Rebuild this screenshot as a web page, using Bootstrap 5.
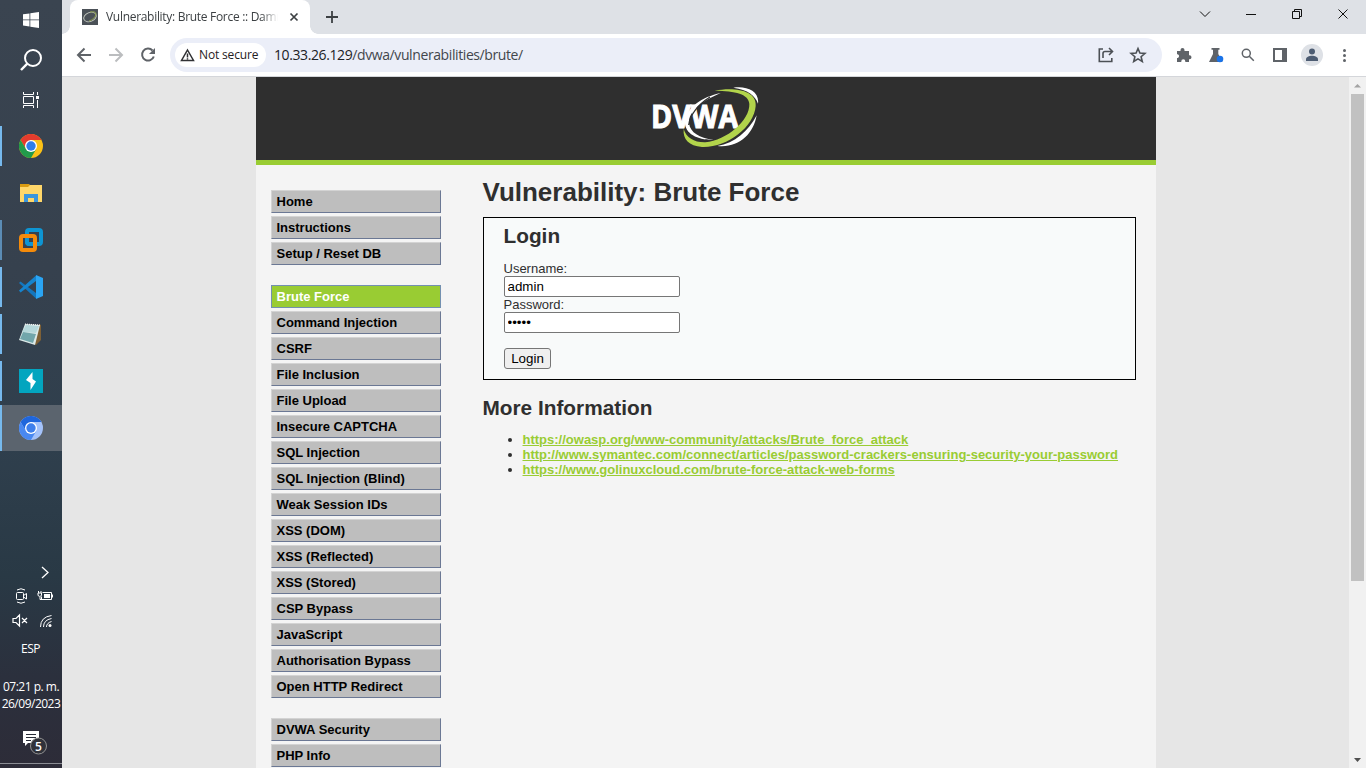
<!DOCTYPE html>
<html lang="en">
<head>
<meta charset="utf-8">
<title>Vulnerability: Brute Force :: Damn Vulnerable Web Application</title>
<link href="https://cdn.jsdelivr.net/npm/bootstrap@5.3.0/dist/css/bootstrap.min.css" rel="stylesheet">
<style>
body{width:1366px;height:768px;overflow:hidden;font-family:"Liberation Sans",Arial,sans-serif;font-size:13px;line-height:15px;color:#2f2f2f}
svg{display:block;flex:none}
.taskbar{width:62px;height:768px;background:linear-gradient(#3a4450 0,#36414e 35%,#2f3f4d 58%,#293945 75%,#2b303d 88%,#2d2c38 100%);color:#fff;font-family:"Open Sans",sans-serif}
.taskbar>*{flex-shrink:0}
.slot{height:40px}
.app{height:46px;margin-bottom:1px;border-left:2px solid transparent;padding-right:2px}
.app.running{border-image:linear-gradient(transparent 4px,#76b9ed 4px,#76b9ed 42px,transparent 42px) 1}
.app.dim{border-image:linear-gradient(transparent 4px,#5b8cb5 4px,#5b8cb5 42px,transparent 42px) 1}
.app.current{background:#5b646e;border-color:#76b9ed}
.tray{margin-top:112px;height:68px}
.lang{font-size:12px;line-height:16px;margin-top:9px;letter-spacing:-.55px;padding-right:1px}
.clock{font-size:12px;line-height:17px;margin-top:21px;letter-spacing:-.5px;white-space:nowrap}
.notice{margin-top:9px;height:40px}
.edge{height:1px;background:#8b8d94;margin-top:auto;margin-bottom:4px}
.tabs-strip{height:34px;background:#dee1e6}
.page-tab{width:240px;height:34px;margin-left:8px;background:#fff;border-radius:8px 8px 0 0;padding:0 11px 0 12px;position:relative}
.page-tab::before,.page-tab::after{content:"";position:absolute;bottom:0;width:8px;height:8px}
.page-tab::before{left:-8px;background:radial-gradient(circle at 0 0,transparent 7.5px,#fff 8px)}
.page-tab::after{right:-8px;background:radial-gradient(circle at 100% 0,transparent 7.5px,#fff 8px)}
.tab-title{width:176px;margin-left:8px;flex:none;font:12px/18px "Open Sans",sans-serif;letter-spacing:-.3px;color:#3c4043;white-space:nowrap;-webkit-mask-image:linear-gradient(90deg,#000 155px,transparent 172px)}
.toolbar-row{height:42px;background:#fff}
.omnibox{height:34px;width:992px;border-radius:17px;background:#ebeef8;margin-left:10px;padding:0 15px 0 5px}
.secure-chip{width:91px;height:24px;border-radius:12px;background:#fff;font:12px/16px "Open Sans",sans-serif;letter-spacing:-.15px;color:#1f2023;padding-left:5px;white-space:nowrap}
.addr{font:14px/20px "Open Sans",sans-serif;color:#42464c;margin-left:8px;letter-spacing:-.4px}
.addr b{font-weight:400;color:#202124}
.viewport{height:692px;border-top:1px solid #d4d6da;background:#e6e6e6}
.site{width:900px;margin-left:194px;background:#f4f4f4}
.site-head{height:88px;background:#2f2f2f;border-bottom:5px solid #9c3;padding:9px 0 0 396px}
.side{width:170px;margin:25px 0 0 15px}
.menu-link{display:block;height:23px;border:1px solid;border-color:#d3d3d3 #6b7894 #6b7894 #d3d3d3;background:#bebebe;color:#000;font-weight:700;line-height:21px;padding-left:4.5px;margin-bottom:3px;text-decoration:none;white-space:nowrap}
.menu-link.selected{background:#9c3;color:#fff;border-color:#7390b0}
.menu-group{margin-bottom:20px}
.main-body{width:653px;margin:11px 0 0 42px}
h1{font-size:26px;font-weight:700;line-height:30px;margin:0 0 10px;padding-top:1px;text-indent:-.5px}
h2{font-size:20.8px;font-weight:700;line-height:24px;margin:0;text-indent:-.5px}
.vuln-box{height:163px;border:1px solid #000;background:#f8fafa;padding:6px 20px}
.vuln-box label{text-indent:-.5px}
.field{display:block;width:176px;height:21px;border:1px solid #767676;border-radius:2px;background:#fff;color:#000;padding:1px 2.5px;font-size:13.33px;line-height:17px}
.submit{display:block;height:21px;width:47px;border:1px solid #767676;border-radius:3px;background:#efefef;color:#000;padding:0;font-size:13.33px;line-height:18px;margin-top:15px}
.links{margin:12px 0 0;padding-left:39.500px}
.links a{color:#9c3;font-weight:700}
.links li{white-space:nowrap}
.scroller{width:17px;background:#f1f1f1}
.thumb{width:13px;height:487px;background:#c1c1c1}
</style>
</head>
<body class="d-flex">
<nav class="taskbar d-flex flex-column flex-shrink-0">
  <div class="slot d-flex align-items-center justify-content-center"><svg width="16" height="16" viewBox="0 0 16 16" fill="#fff"><path d="M0 2.3 6.5 1.4V7.5H0zM7.3 1.2 16 0V7.5H7.3zM0 8.3H6.5V14.5L0 13.6zM7.3 8.3H16V16L7.3 14.7z"/></svg></div>
  <div class="slot d-flex align-items-center justify-content-center"><svg width="22" height="22" viewBox="0 0 22 22" fill="none" stroke="#fff" stroke-width="2"><circle cx="13" cy="9" r="8"/><path d="M7.3 14.7 1 21" stroke-width="2.4"/></svg></div>
  <div class="slot d-flex align-items-center justify-content-center mb-1"><svg width="16" height="16" viewBox="0 0 16 16" fill="none" stroke="#fff"><path d="M.5 4.5h10v7H.5zM.5 0v2.5h10V0M.5 16v-2.500h10V16M14.500 0v3M14.500 8v8"/><path d="M13 4h3v3h-3z" fill="#fff" stroke="none"/></svg></div>
  <div class="app running d-flex align-items-center justify-content-center" style="margin-top:-1px"><svg width="24" height="24" viewBox="0 0 24 24"><circle cx="12" cy="12" r="12" fill="#fbc116"/><path d="M12 6h10.400A12 12 0 0 0 1.600 6L7 15z" fill="#e33b2e"/><path d="M1.600 6A12 12 0 0 0 12 24l5.200-9L12 17.500 7 15z" fill="#229b4b"/><circle cx="12" cy="12" r="6" fill="#fff"/><circle cx="12" cy="12" r="4.700" fill="#2f7de9"/></svg></div>
  <div class="app d-flex align-items-center justify-content-center"><svg width="22" height="18" viewBox="0 0 22 18"><path d="M0 0h9l2 2h11v5H0z" fill="#d99b12"/><path d="M0 3h8l2-2h12v17H0z" fill="#ffd76a"/><path d="M4 18v-8h14v8h-4v-4H8v4z" fill="#3b96dd"/></svg></div>
  <div class="app dim d-flex align-items-center justify-content-center"><svg width="24" height="24" viewBox="0 0 24 24" fill="none" stroke-width="4"><rect x="8" y="2" width="14" height="14" rx="2" stroke="#0e95d3"/><rect x="2" y="8" width="14" height="14" rx="2" stroke="#f58b0a"/><path d="M8 10V14q0 2 2 2h4" stroke="#0e95d3" stroke-width="3.500"/></svg></div>
  <div class="app running d-flex align-items-center justify-content-center"><svg width="24" height="24" viewBox="0 0 24 24"><path d="M17 6v12L1.500 6.500 0 8l17 15.500z" fill="#1476bd"/><path d="M17 .5 0 15.500 1.500 17.500 17 6z" fill="#1684ce"/><path d="M17 0l7 3v18l-7 3z" fill="#2aa5f4"/></svg></div>
  <div class="app running d-flex align-items-center justify-content-center"><svg width="24" height="24" viewBox="0 0 24 24"><path d="M20 2l2 1v15l-5 5-2-1z" fill="#7e6036"/><path d="M6 2l15 1-5 20L0 18z" fill="#dce9e8"/><path d="M7 3l13 1-3 7-14-1z" fill="#b5d8db"/><path d="M4 10l13 2-3 9L1 17z" fill="#71a6ab"/><path d="M6 2l15 1" stroke="#fff" stroke-dasharray="1 1"/></svg></div>
  <div class="app running d-flex align-items-center justify-content-center"><svg width="24" height="24" viewBox="0 0 24 24"><path d="M0 0h24v24H0z" fill="#03a5bf"/><path d="M13.500 3v7l3.500 2.500L11.500 21v-7L7 11z" fill="#fff"/></svg></div>
  <div class="app current d-flex align-items-center justify-content-center"><svg width="24" height="24" viewBox="0 0 24 24"><circle cx="12" cy="12" r="12" fill="#a4c2fa"/><path d="M12 6h10.400A12 12 0 0 0 1.600 6L7 15z" fill="#1f66dc"/><path d="M1.600 6A12 12 0 0 0 12 24l5.200-9L12 17.500 7 15z" fill="#4988f0"/><circle cx="12" cy="12" r="6" fill="#fff"/><circle cx="12" cy="12" r="4.700" fill="#3e7fec"/></svg></div>
  <div class="tray"><svg width="62" height="68" viewBox="0 564 62 68" fill="none" stroke="#fff"><path d="M42 567l6 5.500-6 5.500" stroke-width="1.300"/><rect x="16.500" y="592.500" width="7" height="7" rx="1"/><path d="M23.500 595.500l3-2v5.500l-3-2M17 590q4-2.500 8 0M17 602q4 2.500 8 0"/><path d="M42.500 592.500h9v7h-10v-3"/><path d="M44 594h6v4h-6z" fill="#fff" stroke="none"/><path d="M52.500 594.500v3M38 593h3.500v2.500q-1.700 2-3.500 0zM38.500 591v2M41 591v2M40 597v2.500h2"/><path d="M13 618.500h3l3.500-3.500v11l-3.500-3.500h-3zM22 618l5 5M27 618l-5 5" stroke-width="1.200"/><path d="M40.500 627q0-10 11-11.500M43.500 627q0-7 8-8.500M46.500 627q0-4 5-5.500"/><circle cx="50" cy="625.500" r="1.500" fill="#fff" stroke="none"/></svg></div>
  <div class="lang text-center">ESP</div>
  <div class="clock text-center">07:21 p. m.<br>26/09/2023</div>
  <div class="notice"><svg width="62" height="40" viewBox="0 721 62 40"><path d="M23 731h16v12H28l-3 3v-3h-2z" fill="#fff"/><path d="M26 734.500h10M26 737.500h10M26 740.500h5" stroke="#292d38"/><circle cx="38.500" cy="746" r="8" fill="#30323a" stroke="#929292"/><text x="38.500" y="750.500" text-anchor="middle" font-family="Open Sans" font-size="12" font-weight="600" fill="#fff">5</text></svg></div>
  <div class="edge"></div>
</nav>
<div class="flex-grow-1">
  <header class="tabs-strip d-flex">
    <div class="page-tab d-flex align-items-center">
      <svg width="16" height="16" viewBox="0 0 16 16"><path d="M0 0h16v16H0z" fill="#4b5157"/><ellipse cx="8" cy="8" rx="6.500" ry="4.500" transform="rotate(-22 8 8)" fill="none" stroke="#c4c9c0" stroke-width=".9"/><path d="M8 3q6-1 6 2-1 5-7 7" fill="none" stroke="#8b9d4c"/></svg>
      <div class="tab-title">Vulnerability: Brute Force :: Damn</div>
      <svg class="ms-auto" width="10" height="10" viewBox="0 0 10 10" stroke="#3c4043" stroke-width="1.700"><path d="M1.500 1.500l7 7M8.500 1.500l-7 7"/></svg>
    </div>
    <svg width="40" height="34" viewBox="310 0 40 34" stroke="#3c4043" stroke-width="1.800"><path d="M326 17h12M332 11v12"/></svg>
    <svg class="ms-auto" width="176" height="34" viewBox="1190 0 176 34" stroke="#111" fill="none"><path d="M1200 11.500l5 5 5-5M1246 14.500h10M1292.500 11.500h7v7h-7zM1294.500 11.500v-2h7v7h-2M1338.500 9.500l9 9M1347.500 9.500l-9 9"/></svg>
  </header>
  <div class="toolbar-row d-flex align-items-center">
    <svg width="98" height="42" viewBox="62 34 98 42" fill="none" stroke="#5f6368" stroke-width="2"><path d="M91 55H78M84.500 48.500 78 55l6.500 6.500"/><path d="M109 55h13M115.500 48.500 122 55l-6.500 6.500" stroke="#bbbdbf"/><path d="M152.500 50.500a6 6 0 1 0 1.300 6"/><path d="M155 48v6h-6z" fill="#5f6368" stroke="none"/></svg>
    <div class="omnibox d-flex align-items-center">
      <div class="secure-chip d-flex align-items-center"><svg class="me-1" width="15" height="14" viewBox="0 0 15 14" fill="none" stroke="#303134" stroke-width="1.500"><path d="M7.500 2l6 10.500h-12zM7.500 5.500v4M7.500 10.200v1.300"/></svg>Not secure</div>
      <div class="addr"><b>10.33.26.129</b>/dvwa/vulnerabilities/brute/</div>
      <svg class="ms-auto" width="50" height="34" viewBox="1097 38 50 34" fill="none" stroke="#4c5055" stroke-width="1.600"><path d="M1103 49h-3.700v12.500h12.500V58M1103 58v-4.500q0-2 2-2h7M1109 48l3.500 3.500-3.500 3.500"/><path d="M1138 48.500l1.900 4.600 5 .4-3.800 3.200 1.200 4.800-4.300-2.600-4.300 2.600 1.200-4.800-3.800-3.200 5-.4z"/></svg>
    </div>
    <svg width="204" height="42" viewBox="1162 34 204 42" fill="#5f6368"><path d="M1177 51h3.500v-1a2 2 0 0 1 4 0v1h4.500v4.300h.5a2 2 0 0 1 0 4h-.5V62h-3.700v-.7a2 2 0 0 0-4 0v.7H1177v-4h.7a2 2 0 0 0 0-3.800h-.7z"/><path d="M1211.500 48h8v1.700h-1.200V54l4.200 8h-13.500l4-8v-4.300h-1.500z"/><circle cx="1220" cy="59" r="3.300" fill="#1a73e8"/><g fill="none" stroke="#5f6368" stroke-width="1.500"><circle cx="1246.300" cy="53.300" r="4"/><path d="M1249.300 56.300l4.500 4.500"/></g><path fill-rule="evenodd" d="M1273 48h14v14h-14zM1275 50v10h7V50z"/><circle cx="1312" cy="55" r="11" fill="#dee1e6"/><g fill="#4d5c72"><circle cx="1312" cy="51.500" r="3"/><path d="M1306 61v-1.500c0-5 12-5 12 0V61z"/></g><circle cx="1344.500" cy="50.500" r="1.500"/><circle cx="1344.500" cy="55.500" r="1.500"/><circle cx="1344.500" cy="60.500" r="1.500"/></svg>
  </div>
  <div class="viewport d-flex">
    <div class="site">
      <div class="site-head"><svg width="107" height="62" viewBox="66 33 321 186"><path d="M310 38C350 32 389 48 384 86 376 62 354 44 310 38z" fill="#fff"/><path d="M380 121C370 178 326 220 262 213 315 204 354 170 380 121z" fill="#fff"/><path d="M272 54C220 76 174 108 177 145 181 174 208 188 250 195 205 196 164 177 165 142 169 96 216 66 272 54z" fill="#fff"/><text x="63" y="159" font-family="Open Sans" font-weight="700" font-size="97" fill="#fff" stroke="#fff" stroke-width="3" textLength="262" lengthAdjust="spacingAndGlyphs">DVWA</text><path d="M176 150C182 117 205 88 240 66" fill="none" stroke="#2f2f2f" stroke-width="4"/><path d="M254 47C310 36 381 44 377 93 372 157 290 219 216 216 177 213 158 193 161 162 169 188 193 203 226 202 290 196 360 136 358 87 357 57 316 48 254 47z" fill="#b2d44b"/></svg></div>
      <div class="d-flex">
        <div class="side">
          <div class="menu-group"><a class="menu-link">Home</a><a class="menu-link">Instructions</a><a class="menu-link">Setup / Reset DB</a></div>
          <div class="menu-group"><a class="menu-link selected">Brute Force</a><a class="menu-link">Command Injection</a><a class="menu-link">CSRF</a><a class="menu-link">File Inclusion</a><a class="menu-link">File Upload</a><a class="menu-link">Insecure CAPTCHA</a><a class="menu-link">SQL Injection</a><a class="menu-link">SQL Injection (Blind)</a><a class="menu-link">Weak Session IDs</a><a class="menu-link">XSS (DOM)</a><a class="menu-link">XSS (Reflected)</a><a class="menu-link">XSS (Stored)</a><a class="menu-link">CSP Bypass</a><a class="menu-link">JavaScript</a><a class="menu-link">Authorisation Bypass</a><a class="menu-link">Open HTTP Redirect</a></div>
          <div><a class="menu-link">DVWA Security</a><a class="menu-link">PHP Info</a></div>
        </div>
        <main class="main-body">
          <h1>Vulnerability: Brute Force</h1>
          <div class="vuln-box">
            <h2 class="mb-2">Login</h2>
            <form style="padding-top:5px"><label class="d-block" for="user">Username:</label><input class="field" id="user" type="text" value="admin"><label class="d-block" for="pass">Password:</label><input class="field" id="pass" type="password" value="admin"><button class="submit" type="button">Login</button></form>
          </div>
          <h2 class="mt-3">More Information</h2>
          <ul class="links"><li><a href="#">https://owasp.org/www-community/attacks/Brute_force_attack</a></li><li><a href="#">http://www.symantec.com/connect/articles/password-crackers-ensuring-security-your-password</a></li><li><a href="#">https://www.golinuxcloud.com/brute-force-attack-web-forms</a></li></ul>
        </main>
      </div>
    </div>
    <div class="scroller ms-auto d-flex flex-column align-items-center"><svg width="17" height="17" viewBox="0 0 17 17" fill="#a3a3a3"><path d="M5 10.500h7L8.500 7z"/></svg><div class="thumb"></div><svg class="mt-auto" width="17" height="17" viewBox="0 0 17 17" fill="#505050"><path d="M5 7h7l-3.500 4z"/></svg></div>
  </div>
</div>
<script src="https://cdn.jsdelivr.net/npm/bootstrap@5.3.0/dist/js/bootstrap.bundle.min.js"></script>
</body>
</html>
